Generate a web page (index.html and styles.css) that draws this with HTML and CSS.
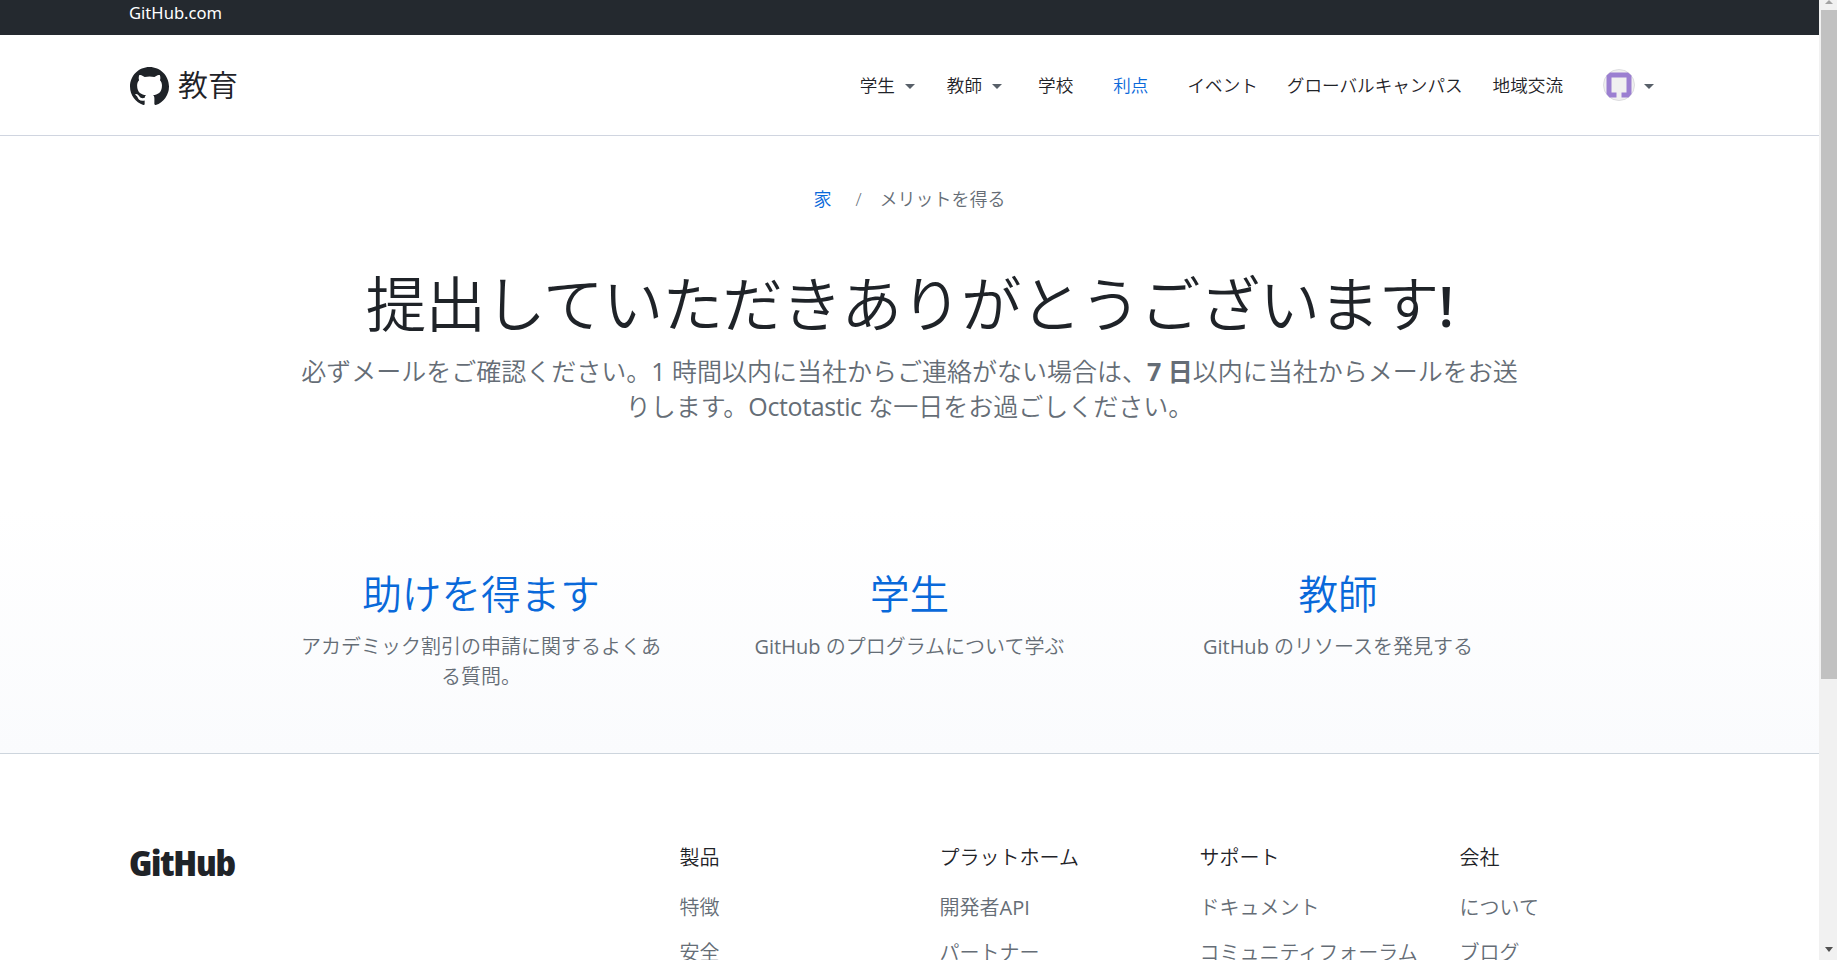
FILE: index.html
```html
<!DOCTYPE html>
<html lang="ja">
<head>
<meta charset="utf-8">
<title>GitHub Education</title>
<link rel="stylesheet" href="styles.css">
</head>
<body>
<div class="page">
  <div class="topbar"><a>GitHub.com</a></div>
  <header class="header">
    <a class="brand">
      <svg class="mark" viewBox="0 0 16 16"><path fill="#1f2328" d="M8 0C3.58 0 0 3.58 0 8c0 3.54 2.29 6.53 5.47 7.59.4.07.55-.17.55-.38 0-.19-.01-.82-.01-1.49-2.01.37-2.53-.49-2.69-.94-.09-.23-.48-.94-.82-1.13-.28-.15-.68-.52-.01-.53.63-.01 1.08.58 1.23.82.72 1.21 1.87.87 2.33.66.07-.52.28-.87.51-1.07-1.78-.2-3.64-.89-3.64-3.95 0-.87.31-1.59.82-2.15-.08-.2-.36-1.02.08-2.12 0 0 .67-.21 2.2.82.64-.18 1.32-.27 2-.27s1.36.09 2 .27c1.53-1.04 2.2-.82 2.2-.82.44 1.1.16 1.92.08 2.12.51.56.82 1.27.82 2.15 0 3.07-1.87 3.75-3.65 3.95.29.25.54.73.54 1.48 0 1.07-.01 1.93-.01 2.2 0 .21.15.46.55.38A8.01 8.01 0 0 0 16 8c0-4.42-3.58-8-8-8z"/></svg>
      <span>教育</span>
    </a>
    <nav class="nav">
      <a class="drop">学生<i class="caret"></i></a>
      <a class="drop">教師<i class="caret"></i></a>
      <a class="school">学校</a>
      <a class="benefit">利点</a>
      <a class="event">イベント</a>
      <a class="campus">グローバルキャンパス</a>
      <a>地域交流</a>
      <a class="user">
        <svg class="avatar" viewBox="0 0 32 32"><circle cx="16" cy="16" r="15.5" fill="#f0f0f0" stroke="#dcdcdf"/><path fill="#9b7fd1" d="M7 3.500H25L28.500 6.500V25L25.500 28.500H18.500V23.500H23.500V8.500H8.500V23.500H13.500V28.500H6.500L3.500 25V6.500Z"/></svg>
        <i class="caret"></i>
      </a>
    </nav>
  </header>
  <main class="main">
    <div class="crumbs"><a>家</a><span class="slash">/</span><span>メリットを得る</span></div>
    <h1>提出していただきありがとうございます<span class="bang">!</span></h1>
    <p class="lede">必ずメールをご確認ください。<span class="latin">1</span> 時間以内に当社からご連絡がない場合は、<b>7 日</b>以内に当社からメールをお送<br>りします。<span class="latin word">Octotastic</span> な一日をお過ごしください。</p>
    <div class="cards">
      <section><h2>助けを得ます</h2><p>アカデミック割引の申請に関するよくあ<br>る質問。</p></section>
      <section><h2>学生</h2><p><span class="latin">GitHub</span> のプログラムについて学ぶ</p></section>
      <section><h2>教師</h2><p><span class="latin">GitHub</span> のリソースを発見する</p></section>
    </div>
  </main>
  <footer class="footer">
    <div class="wordmark">GitHub</div>
    <div class="col"><h3>製品</h3><a>特徴</a><a>安全</a></div>
    <div class="col"><h3>プラットホーム</h3><a>開発者<span class="latin">API</span></a><a>パートナー</a></div>
    <div class="col"><h3>サポート</h3><a>ドキュメント</a><a>コミュニティフォーラム</a></div>
    <div class="col"><h3>会社</h3><a>について</a><a>ブログ</a></div>
  </footer>
</div>
<div class="scrollbar"><i class="up"></i><div class="thumb"></div><i class="down"></i></div>
</body>
</html>
```
FILE: styles.css
```css
* { box-sizing: border-box; }
body {
  margin: 0;
  height: 960px;
  overflow: hidden;
  display: flex;
  background: #fff;
  color: #1f2328;
  font: 350 17.6px/26px "Open Sans", "Noto Sans CJK JP", sans-serif;
}
h1, h2, h3, p { margin: 0; font-weight: 350; }
a { white-space: nowrap; }
.latin { font-weight: 400; }
.word { letter-spacing: -0.4px; }
.page { width: 1819px; height: 960px; overflow: hidden; }
.topbar { height: 35px; background: #24292f; color: #fff; padding-left: 129px; font: 400 16.6px/25px "Noto Sans", sans-serif; }
.header { height: 101px; padding: 0 165px 0 130px; border-bottom: 1px solid #d0d5e0; display: flex; align-items: center; justify-content: space-between; }
.brand { display: flex; align-items: center; gap: 9px; font-size: 30px; line-height: 40px; }
.mark { width: 39px; height: 39px; margin-top: 2px; }
.nav { display: flex; align-items: center; font-size: 17.6px; line-height: 24px; }
.nav a { margin-right: 30px; }
.nav .drop { display: flex; align-items: center; gap: 10px; margin-right: 32px; }
.nav .school { margin: 0 40px 0 4px; }
.nav .benefit { color: #0969da; margin-right: 39px; }
.nav .event { margin-right: 29px; }
.nav .campus { margin-right: 30px; }
.caret { width: 0; height: 0; border: 5px solid transparent; border-top-color: #586069; border-bottom: 0; margin-top: 2px; }
.nav .user { display: flex; align-items: center; gap: 9px; margin: 0 0 0 10px; }
.avatar { width: 32px; height: 32px; }
.main { height: 618px; border-bottom: 1px solid #cdd5dd; background: linear-gradient(#fff 60%, #fafbfd); color: #656d76; text-align: center; }
.crumbs { padding-top: 50px; height: 118px; display: flex; justify-content: center; font-size: 18px; }
.crumbs a { color: #0969da; }
.slash { width: 8px; margin: 0 17px 0 23px; }
h1 { color: #1f2328; font-size: 60.500px; line-height: 100px; letter-spacing: -0.800px; height: 100px; white-space: nowrap; }
.bang { font-weight: 600; font-size: 56px; }
.lede { font-size: 25px; line-height: 35px; white-space: nowrap; }
.lede b { font-weight: 700; }
.cards { width: 1230px; margin: 142px auto 0; display: grid; grid-template-columns: 373px 484px 373px; }
.cards h2 { color: #0969da; font-size: 39.600px; line-height: 56px; }
.cards p { font-size: 20px; line-height: 30px; padding-top: 10px; }
.footer { padding: 89px 0 0 130px; display: grid; grid-template-columns: 549.500px repeat(4, 260px); font-size: 20px; }
.col { display: flex; flex-direction: column; }
.col h3 { font-size: 20px; line-height: 30px; margin-bottom: 20px; }
.col a { color: #656d76; line-height: 30px; margin-bottom: 15px; }
.wordmark { font: 800 35px/40px "Open Sans", sans-serif; font-stretch: 75%; letter-spacing: -1px; margin-left: -1px; transform: scaleX(1.12); transform-origin: left; }
.scrollbar { width: 18px; height: 960px; background: #f1f1f1; display: flex; flex-direction: column; align-items: center; padding-left: 2px; }
.thumb { width: 16px; height: 669px; background: #c1c1c1; margin-bottom: 268px; }
.up, .down { border: 4px solid transparent; }
.up { border-top: 0; border-bottom: 4px solid #a3a3a3; margin-bottom: 6px; }
.down { border-bottom: 0; border-top: 5px solid #505050; }
```
